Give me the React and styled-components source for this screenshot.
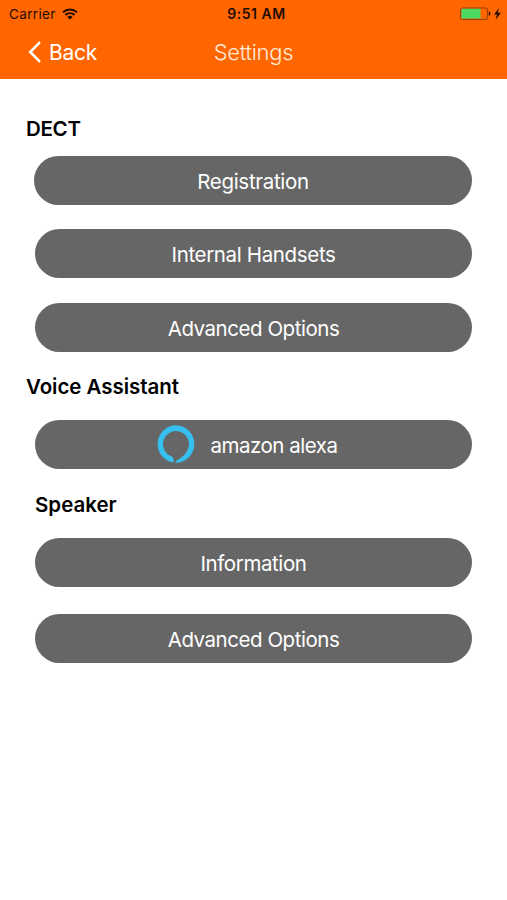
import React from 'react'
import styled, { createGlobalStyle } from 'styled-components'

const sections = [
  {
    title: 'DECT',
    space: 38,
    gap: 15,
    tracking: -0.3,
    items: [
      { label: 'Registration', wide: true, tracking: -0.3 },
      { label: 'Internal Handsets', space: 24, tracking: -0.35 },
      { label: 'Advanced Options', space: 25, tracking: -0.46 }
    ]
  },
  {
    title: 'Voice Assistant',
    space: 23,
    gap: 21,
    tracking: -0.05,
    items: [{ label: 'amazon alexa', icon: true, tracking: -0.5 }]
  },
  {
    title: 'Speaker',
    space: 24,
    gap: 21,
    indent: 9,
    items: [
      { label: 'Information', tracking: -0.4 },
      { label: 'Advanced Options', space: 27, tracking: -0.46 }
    ]
  }
]

const WifiIcon = () => (
  <svg width='16' height='12' viewBox='0 0 16 12' fill='none' stroke='#1f0c00' strokeWidth='1.9'>
    <path d='M1 4.3a10.2 10.2 0 0 1 14 0' />
    <path d='M3.4 7a6.6 6.6 0 0 1 9.2 0' />
    <path d='M5.4 8.9a3.8 3.8 0 0 1 5.2 0L8 11.6z' fill='#1f0c00' stroke='none' />
  </svg>
)

const BatteryIcon = () => (
  <svg width='43' height='14' viewBox='0 0 43 14'>
    <rect x='0.6' y='1' width='27' height='11.4' rx='2' fill='none' stroke='#8a3a00' />
    <path d='M2.4 1.8H20.4V11.6H2.4a1 1 0 0 1-1-1V2.8a1 1 0 0 1 1-1z' fill='#4cd964' />
    <path d='M28.8 4.6c2.1.4 2.1 3.8 0 4.2z' fill='#1f0c00' />
    <path d='M39 1L34 7.5h3l-1.4 5.2 5.4-7h-3.3z' fill='#1f0c00' />
  </svg>
)

const BackIcon = () => (
  <svg width='14' height='22' viewBox='0 0 14 22' fill='none' stroke='#fff' strokeWidth='2.6'>
    <path d='M12 1.2L2.2 11l9.8 9.8' />
  </svg>
)

const AlexaIcon = () => (
  <svg width='38' height='38' viewBox='0 0 38 38'>
    <path
      fill='#35c0f0'
      d='M19 .3A18.7 18.7 0 0 0 16.6 37.5V34.6C16.6 33.2 16 32.2 14.8 31.4A13 13 0 1 1 32 19.6C31.6 26 27 31.4 21 34.8C19.6 35.6 18.8 36.4 18.3 37.7A18.7 18.7 0 0 0 19 .3z'
    />
  </svg>
)

const App = () => (
  <Screen>
    <GlobalStyle />
    <Header>
      <StatusBar>
        <Carrier>
          Carrier
          <WifiIcon />
        </Carrier>
        <Time>9:51 AM</Time>
        <Battery>
          <BatteryIcon />
        </Battery>
      </StatusBar>
      <NavBar>
        <Back>
          <BackIcon />
          <span>Back</span>
        </Back>
        <Title>Settings</Title>
      </NavBar>
    </Header>
    <main>
      {sections.map(section => (
        <Section key={section.title} $space={section.space}>
          <Heading $gap={section.gap} $indent={section.indent} $tracking={section.tracking}>
            {section.title}
          </Heading>
          {section.items.map(item => (
            <Button key={item.label} $space={item.space} $wide={item.wide}>
              {item.icon && <AlexaIcon />}
              <Label $withIcon={item.icon} $tracking={item.tracking}>{item.label}</Label>
            </Button>
          ))}
        </Section>
      ))}
    </main>
  </Screen>
)

export default App

const GlobalStyle = createGlobalStyle`
  body {
    margin: 0;
    background: #fff;
  }
`

const Screen = styled.div`
  width: 507px;
  height: 900px;
  overflow: hidden;
  background: #fff;
  font-family: Inter, 'Liberation Sans', sans-serif;
`

const Header = styled.header`
  height: 79px;
  background: #ff6600;
`

const StatusBar = styled.div`
  display: grid;
  grid-template-columns: 1fr auto 1fr;
  align-items: center;
  height: 27px;
  padding: 0 4px 0 9px;
  color: #1f0c00;
  font-size: 13.5px;
`

const Carrier = styled.div`
  display: flex;
  align-items: center;
  gap: 6px;
  letter-spacing: 0.35px;
`

const Time = styled.div`
  padding-left: 1px;
  font-size: 14px;
  font-weight: 600;
  letter-spacing: 0.5px;
`

const Battery = styled.div`
  display: flex;
  justify-content: flex-end;
`

const NavBar = styled.nav`
  display: grid;
  grid-template-columns: 1fr auto 1fr;
  align-items: center;
  height: 50px;
  padding: 0 28px;
  color: #fff;
`

const Back = styled.div`
  display: flex;
  align-items: center;
  gap: 7px;
  font-size: 21px;
  letter-spacing: -0.3px;
`

const Title = styled.div`
  font-size: 22px;
  font-weight: 300;
  letter-spacing: -0.3px;
  color: #ffe9d8;
`

const Section = styled.section`
  padding: ${props => props.$space}px 35px 0;
`

const Heading = styled.h2`
  margin: 0 0 ${props => props.$gap}px ${props => (props.$indent || 0) - 9}px;
  font-size: 20.5px;
  font-weight: 600;
  line-height: 24px;
  letter-spacing: ${props => props.$tracking || 0}px;
  color: #000;
`

const Button = styled.button`
  display: flex;
  align-items: center;
  justify-content: center;
  width: ${props => props.$wide ? 438 : 437}px;
  height: 49px;
  margin: ${props => props.$space || 0}px 0 0 ${props => props.$wide ? -1 : 0}px;
  padding: 0;
  border: 0;
  border-radius: 25px;
  background: #666;
  color: #fff;
  font-family: inherit;
  font-size: 20.5px;

  svg {
    margin-bottom: 1px;
  }
`

const Label = styled.span`
  margin: ${props => props.$withIcon ? '0 13px 0 16px' : 0};
  padding-top: 1px;
  letter-spacing: ${props => props.$tracking || 0}px;
`
